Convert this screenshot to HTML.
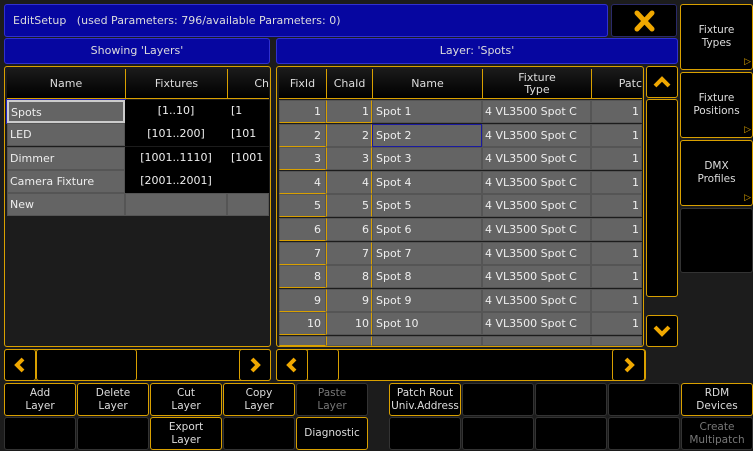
<!DOCTYPE html><html><head><meta charset="utf-8"><style>
*{box-sizing:border-box;margin:0;padding:0}
body{width:753px;height:451px;background:#1c1c1c;position:relative;overflow:hidden;font-family:"DejaVu Sans","Liberation Sans",sans-serif;font-size:11px;color:#e8e8e8}
.a{position:absolute}
.blue{background:#0606a0;border:1px solid #3030d0;border-radius:3px;color:#ddd;font-size:11px}
.y{border:1.5px solid #d9a000;border-radius:3px}
.btn{position:absolute;background:#000;border:1.5px solid #d9a000;border-radius:3px;color:#ddd;font-size:10.5px;text-align:center;display:flex;align-items:center;justify-content:center;line-height:13px}
.btn.off{border-color:#333;color:#777}
.c{position:absolute;overflow:hidden;white-space:nowrap;line-height:22px;font-size:11px}
.h{background:linear-gradient(#1a1a1a,#000);color:#ddd;text-align:center;border-left:1.5px solid #d9a000;border-bottom:1.5px solid #d9a000}
.g{background:#646464;color:#eee;border:1px solid #555}
.k{background:#000;color:#eee;text-align:center}
.tri{position:absolute;right:1px;bottom:0;color:#d9a000;font-size:9px}
</style></head><body>
<div class="a blue" style="left:4px;top:4px;width:604px;height:33px;line-height:31px;padding-left:8px">EditSetup&nbsp;&nbsp;&nbsp;(used Parameters: 796/available Parameters: 0)</div>
<div class="a" style="left:611px;top:4px;width:66px;height:33px;background:#000;border:1px solid #2a2a6a;border-radius:3px"><svg width="66" height="33"><path d="M25 8 L40 24 M40 8 L25 24" stroke="#f0a800" stroke-width="5" stroke-linecap="round"/></svg></div>
<div class="a blue" style="left:4px;top:38px;width:266px;height:26px;line-height:24px;text-align:center">Showing 'Layers'</div>
<div class="a blue" style="left:276px;top:38px;width:402px;height:26px;line-height:24px;text-align:center">Layer: 'Spots'</div>
<div class="btn" style="left:680px;top:4px;width:73px;height:66px">Fixture<br>Types<span class="tri">▷</span></div>
<div class="btn" style="left:680px;top:72px;width:73px;height:66px">Fixture<br>Positions<span class="tri">▷</span></div>
<div class="btn" style="left:680px;top:140px;width:73px;height:66px">DMX<br>Profiles<span class="tri">▷</span></div>
<div class="btn off" style="left:680px;top:208px;width:73px;height:65px"></div>
<div class="a y" style="left:4px;top:66px;width:267px;height:281px;background:#1c1c1c"></div>
<div class="a y" style="left:276px;top:66px;width:368px;height:281px;background:#1c1c1c"></div>
<div id="t"></div>
<div class="btn" style="left:646px;top:66px;width:32px;height:32px"><svg width="20" height="14"><path d="M3 11 L10 4 L17 11" stroke="#f0a800" stroke-width="4" fill="none"/></svg></div>
<div class="a y" style="left:646px;top:99px;width:32px;height:198px;background:#000"></div>
<div class="btn" style="left:646px;top:315px;width:32px;height:32px"><svg width="20" height="14"><path d="M3 3 L10 10 L17 3" stroke="#f0a800" stroke-width="4" fill="none"/></svg></div>
<div class="a y" style="left:4px;top:349px;width:267px;height:32px;background:#000"></div>
<div class="a y" style="left:36px;top:349px;width:101px;height:32px;background:#000"></div>
<div class="btn" style="left:4px;top:349px;width:32px;height:32px"><svg width="14" height="18"><path d="M10 3 L4 9 L10 15" stroke="#f0a800" stroke-width="4" fill="none"/></svg></div>
<div class="btn" style="left:239px;top:349px;width:32px;height:32px"><svg width="14" height="18"><path d="M4 3 L10 9 L4 15" stroke="#f0a800" stroke-width="4" fill="none"/></svg></div>
<div class="a y" style="left:276px;top:349px;width:370px;height:32px;background:#000"></div>
<div class="a y" style="left:306px;top:349px;width:33px;height:32px;background:#000"></div>
<div class="btn" style="left:276px;top:349px;width:32px;height:32px"><svg width="14" height="18"><path d="M10 3 L4 9 L10 15" stroke="#f0a800" stroke-width="4" fill="none"/></svg></div>
<div class="btn" style="left:612px;top:349px;width:33px;height:32px"><svg width="14" height="18"><path d="M4 3 L10 9 L4 15" stroke="#f0a800" stroke-width="4" fill="none"/></svg></div>
<div id="b"></div>
<script>
let h='';
function c(x,y,w,hh,cls,txt,st){h+=`<div class="c ${cls}" style="left:${x}px;top:${y}px;width:${w}px;height:${hh}px;${st||''}">${txt}</div>`}
// left table
c(7,69,118,30,'h','Name','line-height:30px;border-left:0');c(125,69,102,30,'h','Fixtures','line-height:30px');c(227,69,42,30,'h','Ch','line-height:30px;text-align:right');
const L=[['Spots','[1..10]','[1'],['LED','[101..200]','[101'],['Dimmer','[1001..1110]','[1001'],['Camera Fixture','[2001..2001]',''],['New','','']];
L.forEach((r,i)=>{let y=100+i*23.3;c(7,y,118,23,'g',r[0],'padding-left:2px;'+(i==0?'border:2px solid #ccc;outline:1px solid #2020c0;':''));
if(i<4){c(125,y,102,23,'k',r[1]);c(227,y,42,23,'k',r[2],'text-align:left;padding-left:4px')}else{c(125,y,102,23,'g','');c(227,y,42,23,'g','')}});
// right table
c(279,69,47,30,'h','FixId','line-height:30px;border-left:0');c(326,69,46,30,'h','ChaId','line-height:30px');c(372,69,110,30,'h','Name','line-height:30px');
c(482,69,109,30,'h','Fixture<br>Type','line-height:12px;padding-top:3px');c(591,69,51,30,'h','Patc','line-height:30px;text-align:right');
for(let i=0;i<11;i++){let y=100+i*23.6;let n=i+1;let hh=i==10?10:23;
c(279,y,47,hh,'g',i<10?n:'','text-align:right;padding-right:4px;border-bottom:1.5px solid #d9a000');
c(326,y,46,hh,'g',i<10?n:'','text-align:right;padding-right:2px;border-left:1.5px solid #d9a000;border-right:1.5px solid #d9a000'+(i==0?';border-bottom:1.5px solid #d9a000':''));
c(372,y,110,hh,'g',i<10?'Spot '+n:'','padding-left:3px;'+(i==1?'border:1.5px solid #1a1aa0;':''));
c(482,y,109,hh,'g',i<10?'4 VL3500 Spot C':'','padding-left:2px');
c(591,y,51,hh,'g',i<10?'1':'','text-align:right;padding-right:2px');}
document.getElementById('t').innerHTML=h;
let b='';const X=[4,77,150,223,296,389,462,535,608,681],W=[72,72,72,72,72,72,72,72,72,72];
const R1=['Add<br>Layer','Delete<br>Layer','Cut<br>Layer','Copy<br>Layer','~Paste<br>Layer','Patch Rout<br>Univ.Address','','','','RDM<br>Devices'];
const R2=['','','Export<br>Layer','','Diagnostic','','','','','~Create<br>Multipatch'];
[R1,R2].forEach((R,j)=>R.forEach((t,i)=>{let off=t===''||t[0]=='~';b+=`<div class="btn${off?' off':''}" style="left:${X[i]}px;top:${383+j*34}px;width:${W[i]}px;height:33px">${t.replace('~','')}</div>`}));
document.getElementById('b').innerHTML=b;
</script>
</body></html>
